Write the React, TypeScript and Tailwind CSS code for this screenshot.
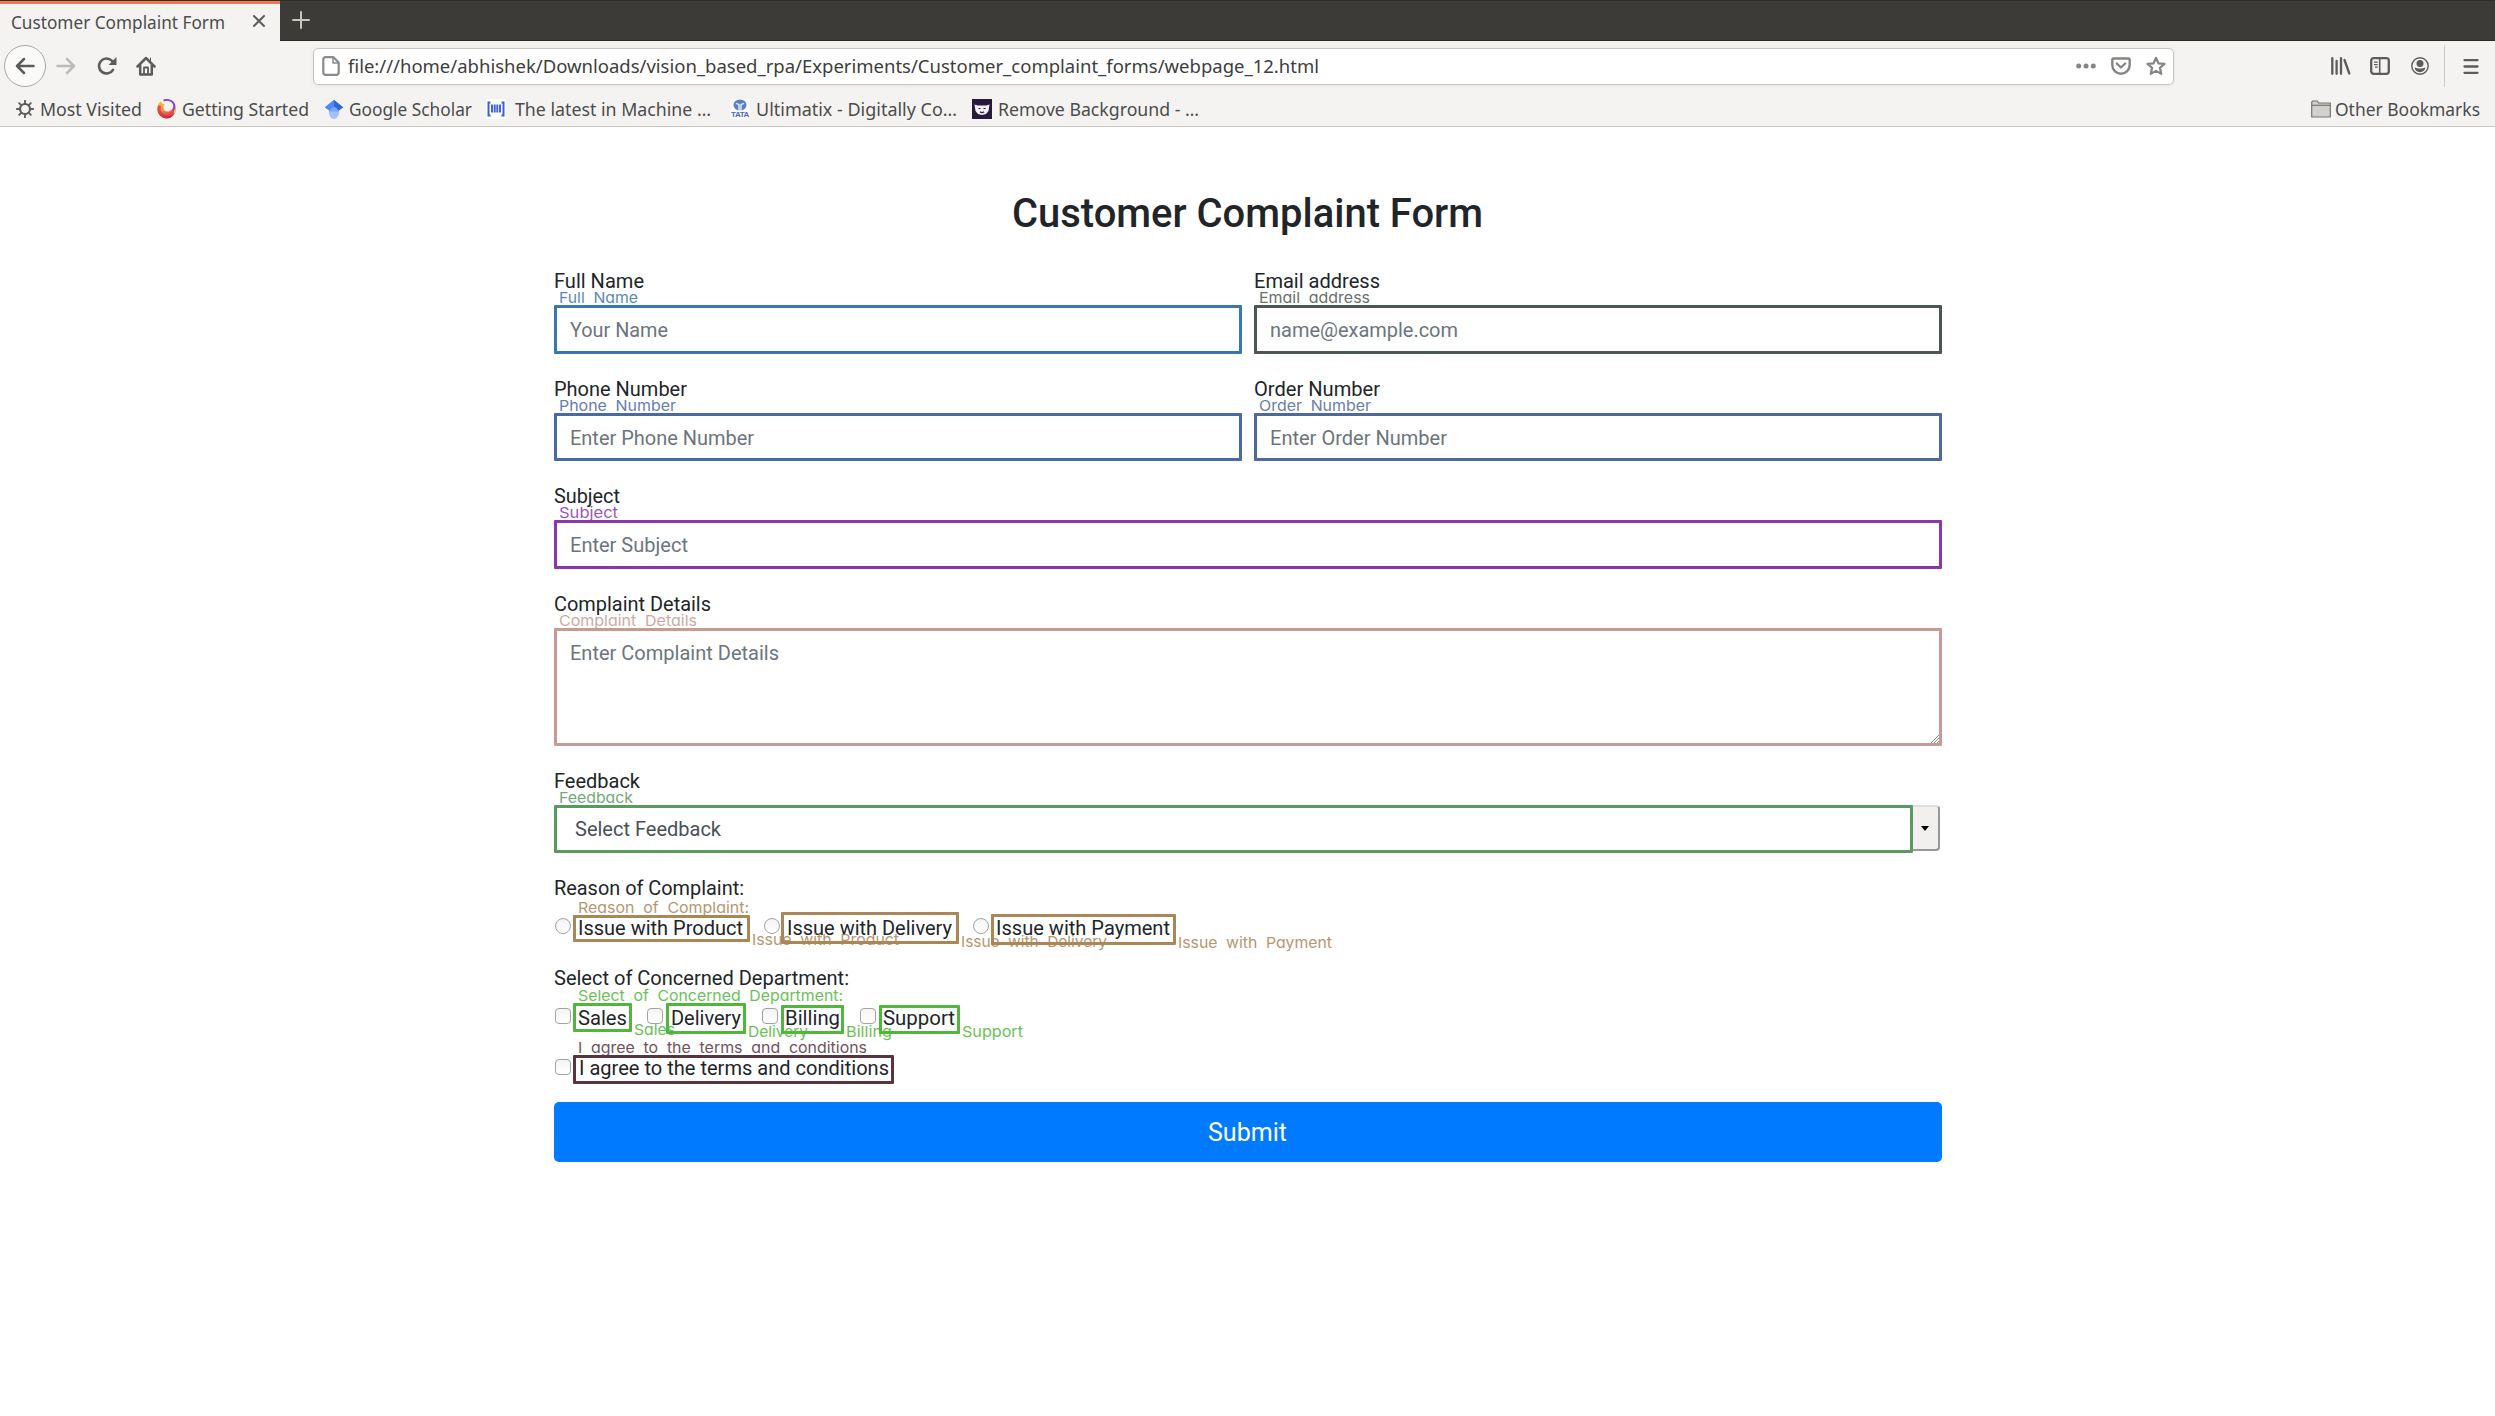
import { useLayoutEffect, useRef, useState } from "react";
import type { ReactNode } from "react";

/** One line of text that is stretched to fill the width given by its class. */
function Fit({ children, className = "" }: { children: ReactNode; className?: string }) {
  const outer = useRef<HTMLSpanElement>(null);
  const inner = useRef<HTMLSpanElement>(null);
  const [scale, setScale] = useState(1);
  useLayoutEffect(() => {
    if (outer.current && inner.current) {
      setScale(outer.current.offsetWidth / inner.current.getBoundingClientRect().width);
    }
  }, []);
  return (
    <span ref={outer} className={`block shrink-0 whitespace-pre ${className}`}>
      <span ref={inner} className="inline-block origin-left" style={{ transform: `scaleX(${scale})` }}>
        {children}
      </span>
    </span>
  );
}

/* ---------- Browser chrome ---------- */

function TabStrip() {
  return (
    <div className="flex h-[41px] border-t border-b border-t-[#2f2e2b] border-b-[#2b2a27] bg-[#3c3b37]">
      <div className="-mb-px flex w-[280px] items-center border-t-[3px] border-[#f0794f] bg-[#f4f3f1] pl-[11px] text-[18px] leading-[35px] text-[#4c4c4c]">
        <Fit className="-mt-px w-[214px]">Customer Complaint Form</Fit>
        <svg className="-mt-[3px] ml-[27px]" width="14" height="14" viewBox="0 0 14 14" stroke="#5c5c5a" strokeWidth="2" strokeLinecap="round">
          <path d="M2 2l10 10M12 2L2 12" />
        </svg>
      </div>
      <svg className="mt-[9px] ml-[11px]" width="20" height="20" viewBox="0 0 20 20" stroke="#c9c6c0" strokeWidth="2" strokeLinecap="round">
        <path d="M10 2v16M2 10h16" />
      </svg>
    </div>
  );
}

function NavBar() {
  return (
    <div className="flex h-[51px] items-center pb-px pl-[4px]">
      <div className="flex size-[42px] items-center justify-center rounded-full border border-[#aaa8a5] bg-[#fafaf9]">
        <svg width="20" height="18" viewBox="0 0 20 18" fill="none" stroke="#5c5c5a" strokeWidth="2.500" strokeLinecap="round" strokeLinejoin="round">
          <path d="M18.500 9H2M9 2L2 9l7 7" />
        </svg>
      </div>
      <svg className="ml-[10px]" width="20" height="18" viewBox="0 0 20 18" fill="none" stroke="#bdbbb8" strokeWidth="2.500" strokeLinecap="round" strokeLinejoin="round">
        <path d="M1.500 9H18M11 2l7 7-7 7" />
      </svg>
      <svg className="ml-[21px]" width="20" height="20" viewBox="0 0 20 20" fill="none" stroke="#5c5c5a" strokeWidth="2.600" strokeLinecap="round">
        <path d="M16 13.800A7.500 7.500 0 1 1 14.800 4.700L17 7" />
        <path d="M19.500 1v8h-8z" fill="#5c5c5a" stroke="none" />
      </svg>
      <svg className="ml-[19px]" width="20" height="20" viewBox="0 0 20 20" fill="none" stroke="#5c5c5a" strokeWidth="2.500" strokeLinecap="round" strokeLinejoin="round">
        <path d="M1.500 10.500L10 2l8.500 8.500M4.200 9.500v9h11.600v-9" />
        <path d="M8 18v-6.500h4V18" strokeWidth="1.800" />
        <path d="M14.500 2v3" strokeWidth="1" />
      </svg>

      <div className="ml-[157px] flex h-[37px] w-[1861px] items-center rounded-[5px] border border-[#c8c5c1] bg-white pl-[8px] shadow-[0_1px_4px_rgba(0,0,0,0.06)]">
        <svg width="18" height="20" viewBox="0 0 18 20" fill="none" stroke="#8b8b8a" strokeWidth="2.200" strokeLinejoin="round">
          <path d="M3.500 1.200h8L16.700 6.500v10a2.200 2.200 0 0 1-2.200 2.300h-11a2.200 2.200 0 0 1-2.200-2.300V3.500a2.200 2.200 0 0 1 2.200-2.300z" />
          <path d="M11 1.500V7h5.500" strokeWidth="1.500" />
        </svg>
        <Fit className="ml-[8px] w-[971px] text-[18.5px] leading-[34px] text-[#3d3d3d]">
          file:///home/abhishek/Downloads/vision_based_rpa/Experiments/Customer_complaint_forms/webpage_12.html
        </Fit>
        <div className="mr-[7px] ml-auto flex items-center">
          <svg width="20" height="6" viewBox="0 0 20 6" fill="#858583">
            <circle cx="2.700" cy="3" r="2.500" />
            <circle cx="10" cy="3" r="2.500" />
            <circle cx="17.300" cy="3" r="2.500" />
          </svg>
          <svg className="ml-[15px]" width="20" height="18" viewBox="0 0 20 18" fill="none" stroke="#858583" strokeWidth="2.400" strokeLinecap="round" strokeLinejoin="round">
            <path d="M2.700 1.500h14.600a1.400 1.400 0 0 1 1.400 1.400V8A8.700 8.700 0 0 1 1.300 8V2.900a1.400 1.400 0 0 1 1.400-1.400z" />
            <path d="M5.800 6.500L10 10.500l4.200-4" />
          </svg>
          <svg className="ml-[15px]" width="20" height="20" viewBox="0 0 20 20" fill="none" stroke="#858583" strokeWidth="2.200" strokeLinejoin="round">
            <path d="M10 1.800l2.400 5.500 6.100.6-4.600 4 1.400 6L10 14.900l-5.300 3 1.400-6-4.600-4 6.100-.6z" />
          </svg>
        </div>
      </div>

      <svg className="ml-[157px]" width="20" height="18" viewBox="0 0 20 18" stroke="#5c5c5a" strokeWidth="2.300" strokeLinecap="round">
        <path d="M1.300 1.200v15.600M5.600 4v12.800M10 1.200v15.600M13.500 3l4.800 13.500" />
      </svg>
      <svg className="ml-[19px]" width="20" height="18" viewBox="0 0 20 18" fill="none" stroke="#5c5c5a" strokeWidth="2.300">
        <rect x="1.200" y="1.200" width="17.600" height="15.600" rx="2.500" />
        <path d="M9.700 1v16" strokeWidth="1.600" />
        <path d="M4 5.200h3.700M4 7.700h3.700M5 10.200h2.700" strokeWidth="1.200" />
      </svg>
      <svg className="ml-[21px]" width="18" height="18" viewBox="0 0 18 18">
        <circle cx="9" cy="9" r="8.200" fill="none" stroke="#5c5c5a" strokeWidth="1.400" />
        <circle cx="9" cy="6.600" r="3.500" fill="#5c5c5a" />
        <path d="M3.700 10.500c2 .8 3 1 5.300 1s3.300-.2 5.300-1c0 2.500-2.400 4.700-5.300 4.700s-5.300-2.200-5.300-4.700z" fill="#5c5c5a" />
      </svg>
      <div className="ml-[15px] h-[42px] w-px bg-[#cfccc8]" />
      <svg className="ml-[18px]" width="16" height="17" viewBox="0 0 16 17" stroke="#5c5c5a" strokeWidth="2.300" strokeLinecap="round">
        <path d="M1.500 2.200h13M1.500 8.500h13M1.500 14.800h13" />
      </svg>
    </div>
  );
}

function GearIcon() {
  return (
    <svg width="18" height="18" viewBox="0 0 18 18" fill="none" stroke="#5c5c5a">
      <circle cx="9" cy="9" r="5" strokeWidth="2.200" />
      <path
        d="M9 .8v3M9 14.200v3M.8 9h3M14.200 9h3M3.200 3.200l2.100 2.100M12.700 12.700l2.100 2.100M14.800 3.200l-2.100 2.100M5.300 12.700l-2.100 2.100"
        strokeWidth="1.900"
        strokeLinecap="round"
      />
    </svg>
  );
}

function FirefoxIcon() {
  return (
    <svg width="19" height="20" viewBox="0 0 19 20">
      <defs>
        <linearGradient id="flame" x1="0.2" y1="0.1" x2="0.7" y2="1">
          <stop offset="0" stopColor="#ffb53a" />
          <stop offset="0.45" stopColor="#f5843c" />
          <stop offset="1" stopColor="#d0244e" />
        </linearGradient>
      </defs>
      <path d="M3.500 2.800C1.200 4.800.2 7.300.3 10.200a9.200 9.200 0 0 0 18.400 0c0-2.700-.8-5-2.500-6.700 1 4.500-1.200 8.700-5.100 8.900-3.200.1-4.900-1.700-4.700-4 .1-1.400.7-2.200 1.700-2.800-1.800-.1-3.200-.8-3.600-2.500z" fill="url(#flame)" />
      <path d="M1 6.500C.2 9 .1 11.500 1.200 14c1.600 3.600 5 5.400 8.600 5.400 2.500 0 4.700-1 6.300-2.600-4.600 1.200-9.200-.2-11.400-3.800C3.500 11 3.300 9 4 6.700z" fill="#c4204f" opacity=".6" />
      <path d="M16.200 3.500c1.700 1.700 2.500 4 2.500 6.700 0 2.200-.8 4.200-2 5.800.8-4 .8-8-.5-12.500z" fill="#ffd23a" />
      <path d="M6.500 1.600c3.300-1.400 7.500-.6 9.600 2.100 2 2.600 1.700 6.300-.5 8" fill="none" stroke="#8040e0" strokeWidth="1.900" />
    </svg>
  );
}

function ScholarIcon() {
  return (
    <svg width="18" height="19" viewBox="0 0 18 19">
      <path d="M9 0L0 7.200l4.500 3.600L9 7z" fill="#4c8bf5" />
      <path d="M9 0l9 7.200-4.500 3.600L9 7z" fill="#3367d6" />
      <path d="M3.800 11.500h10.400c0 3.500-2 7.500-5.200 7.500s-5.200-4-5.200-7.500z" fill="#a0c3ff" />
      <path d="M3.800 11.800C4.500 9 6.500 6.800 9 6.800s4.500 2.200 5.200 5z" fill="#76a7fa" />
      <path d="M9 0L0 7.200l4.500 3.600C5.500 8.500 7 7 9 7z" fill="#4c8bf5" />
      <path d="M9 0l9 7.200-4.500 3.600C12.500 8.500 11 7 9 7z" fill="#3367d6" />
    </svg>
  );
}

function MachineIcon() {
  return (
    <svg className="bg-white" width="20" height="20" viewBox="0 0 20 20" fill="none" stroke="#3c5fd6">
      <path d="M4.500 3.500H2.500v13h2M15.500 3.500h2v13h-2" strokeWidth="2" />
      <path d="M6 5.500v8M8.700 5.500v8M11.300 5.500v8M14 5.500v8" strokeWidth="1.900" />
    </svg>
  );
}

function TataIcon() {
  return (
    <span className="flex h-[20px] w-[20px] flex-col items-center bg-[#fbfbfb]">
      <svg width="14" height="12" viewBox="0 0 14 12">
        <ellipse cx="7" cy="6" rx="6.500" ry="5.500" fill="#5b80c4" />
        <path d="M6 12V5.500L3 4.500M8 12V5.500l3-1" stroke="#fff" strokeWidth="1.200" fill="none" />
      </svg>
      <span className="font-['Liberation_Sans'] text-[8px] leading-[8px] font-bold tracking-[-0.4px] text-[#4a6cb5]">TATA</span>
    </span>
  );
}

function RemoveIcon() {
  return (
    <svg className="bg-[#271a3d]" width="20" height="20" viewBox="0 0 20 20">
      <path d="M2.500 5.500l3 1h9l3-1-1 6.500-2.500 3-4 1-4-1-2.500-3z" fill="#f4f1f6" />
      <path d="M6.500 9.500h2M11.500 9.500h2M8 12.800c1.200.9 2.800.9 4 0" stroke="#271a3d" strokeWidth="1.200" fill="none" />
    </svg>
  );
}

function BookmarksBar() {
  return (
    <div className="flex h-[35px] items-center border-b border-[#c9c5c1] pl-[16px] text-[18px] leading-[34px] text-[#4c4c4c]">
      <GearIcon />
      <Fit className="ml-[6px] w-[102px]">Most Visited</Fit>
      <span className="ml-[15px]"><FirefoxIcon /></span>
      <Fit className="ml-[6px] w-[127px]">Getting Started</Fit>
      <span className="ml-[16px]"><ScholarIcon /></span>
      <Fit className="ml-[6px] w-[123px]">Google Scholar</Fit>
      <span className="ml-[14px]"><MachineIcon /></span>
      <Fit className="ml-[9px] w-[196px]">The latest in Machine …</Fit>
      <span className="ml-[19px]"><TataIcon /></span>
      <Fit className="ml-[6px] w-[201px]">Ultimatix - Digitally Co…</Fit>
      <span className="ml-[15px]"><RemoveIcon /></span>
      <Fit className="ml-[6px] w-[201px]">Remove Background - …</Fit>
      <div className="mr-[15px] ml-auto flex items-center">
        <svg width="20" height="18" viewBox="0 0 20 18" fill="#d2d0cd" stroke="#777573" strokeWidth="1.200">
          <path d="M.7 17V2.200L1.700 1h4.600l1.300 2h11.700v14z" />
          <path d="M.7 5.300h18.600" />
        </svg>
        <Fit className="ml-[4px] w-[145px]">Other Bookmarks</Fit>
      </div>
    </div>
  );
}

/* ---------- Form ---------- */

const caption =
  "absolute font-['Inter'] text-[15px] leading-[16px] font-normal [word-spacing:4px] [font-feature-settings:'cv11'] opacity-85";

interface FieldProps {
  label: string;
  labelWidth: string;
  captionWidth: string;
  color: string;
  text: string;
  textWidth: string;
  boxClass?: string;
  children?: ReactNode;
}

function Field({ label, labelWidth, captionWidth, color, text, textWidth, boxClass = "h-[49px]", children }: FieldProps) {
  return (
    <div className="relative">
      <Fit className={`h-[39px] leading-[30px] ${labelWidth}`}>{label}</Fit>
      <Fit className={`${caption} top-[24px] left-[5px] ${captionWidth} ${color}`}>{label}</Fit>
      <div className={`flex rounded-[1px] border-[3px] border-current ${boxClass} ${color}`}>
        <Fit className={`ml-[13px] h-[43px] leading-[44px] text-[#6c757d] ${textWidth}`}>{text}</Fit>
        {children}
      </div>
    </div>
  );
}

function Mark({ kind, className }: { kind: "radio" | "check"; className: string }) {
  return (
    <span
      className={`mt-[5px] size-[16px] shrink-0 border border-[#a3a3a3] bg-linear-to-b from-[#f4f4f4] to-white ${kind === "radio" ? "rounded-full" : "rounded-[4px]"} ${className}`}
    />
  );
}

function Outline({ className }: { className: string }) {
  return <span className={`absolute rounded-[1px] border-[3px] border-current ${className}`} />;
}

function ComplaintForm() {
  return (
    <main className="mx-auto mt-[54px] w-[1388px] font-['Roboto',sans-serif] text-[20px] text-[#212529]">
      <h1 className="flex h-[85px] justify-center text-[40px] leading-[66px] font-medium">
        <Fit className="w-[471px]">Customer Complaint Form</Fit>
      </h1>

      <div className="grid grid-cols-2 gap-x-[12px]">
        <div className="h-[108px]">
          <Field label="Full Name" labelWidth="w-[90px]" captionWidth="w-[79px]" color="text-[#3778b1]" text="Your Name" textWidth="w-[98px]" />
        </div>
        <div className="h-[108px]">
          <Field label="Email address" labelWidth="w-[126px]" captionWidth="w-[111px]" color="text-[#4d5752]" text="name@example.com" textWidth="w-[188px]" />
        </div>
        <div className="h-[107px]">
          <Field label="Phone Number" labelWidth="w-[133px]" captionWidth="w-[117px]" color="text-[#4a69a7]" text="Enter Phone Number" textWidth="w-[184px]" boxClass="h-[48px]" />
        </div>
        <div className="h-[107px]">
          <Field label="Order Number" labelWidth="w-[126px]" captionWidth="w-[112px]" color="text-[#50699c]" text="Enter Order Number" textWidth="w-[177px]" boxClass="h-[48px]" />
        </div>
      </div>

      <div className="h-[108px]">
        <Field label="Subject" labelWidth="w-[66px]" captionWidth="w-[59px]" color="text-[#8a37ad]" text="Enter Subject" textWidth="w-[118px]" />
      </div>

      <div className="h-[177px]">
        <Field label="Complaint Details" labelWidth="w-[157px]" captionWidth="w-[138px]" color="text-[#c69b94]" text="Enter Complaint Details" textWidth="w-[209px]" boxClass="h-[118px]">
          <svg className="mt-auto ml-auto" width="8" height="8" viewBox="0 0 8 8" stroke="#8f8f8f" strokeWidth="1">
            <path d="M0 8L8 0M3 8l5-5M6 8l2-2" />
          </svg>
        </Field>
      </div>

      <div className="relative h-[107px]">
        <Fit className="h-[39px] w-[86px] leading-[30px]">Feedback</Fit>
        <Fit className={`${caption} top-[24px] left-[5px] w-[74px] text-[#5a9a60]`}>Feedback</Fit>
        <div className="flex">
          <div className="h-[48px] w-[1359px] rounded-[1px] border-[3px] border-[#5a9a60] pl-[18px] leading-[42px] text-[#495057]">
            <Fit className="w-[146px]">Select Feedback</Fit>
          </div>
          <div className="flex h-[46px] w-[27px] items-center justify-center rounded-r-[4px] border-t-2 border-r-2 border-b-2 border-t-[#dedfe1] border-r-[#989898] border-b-[#989898] bg-[#f1f0ee]">
            <svg width="8" height="5" viewBox="0 0 8 5">
              <path d="M0 0h8L4 5z" />
            </svg>
          </div>
        </div>
      </div>

      <section className="relative h-[90px]">
        <Fit className="h-[40px] w-[190px] leading-[30px]">Reason of Complaint:</Fit>
        <div className="flex leading-[30px]">
          <Mark kind="radio" className="ml-px" />
          <Fit className="ml-[7px] w-[165px]">Issue with Product</Fit>
          <Mark kind="radio" className="ml-[21px]" />
          <Fit className="ml-[7px] w-[165px]">Issue with Delivery</Fit>
          <Mark kind="radio" className="ml-[21px]" />
          <Fit className="ml-[7px] w-[174px]">Issue with Payment</Fit>
        </div>
        <div className="text-[#ab8657]">
          <Outline className="top-[42px] left-[19px] h-[27px] w-[177px]" />
          <Outline className="top-[39px] left-[227px] h-[32px] w-[178px]" />
          <Outline className="top-[41px] left-[437px] h-[31px] w-[185px]" />
          <Fit className={`${caption} top-[27px] left-[24px] w-[171px]`}>Reason of Complaint:</Fit>
          <Fit className={`${caption} top-[59px] left-[198px] w-[147px]`}>Issue with Product</Fit>
          <Fit className={`${caption} top-[61px] left-[407px] w-[146px]`}>Issue with Delivery</Fit>
          <Fit className={`${caption} top-[62px] left-[624px] w-[154px]`}>Issue with Payment</Fit>
        </div>
      </section>

      <section className="relative h-[90px]">
        <Fit className="h-[40px] w-[295px] leading-[30px]">Select of Concerned Department:</Fit>
        <div className="flex leading-[30px]">
          <Mark kind="check" className="ml-px" />
          <Fit className="ml-[7px] w-[49px]">Sales</Fit>
          <Mark kind="check" className="ml-[20px]" />
          <Fit className="ml-[8px] w-[70px]">Delivery</Fit>
          <Mark kind="check" className="ml-[21px]" />
          <Fit className="ml-[7px] w-[55px]">Billing</Fit>
          <Mark kind="check" className="ml-[20px]" />
          <Fit className="ml-[7px] w-[72px]">Support</Fit>
        </div>
        <div className="text-[#4fb739]">
          <Outline className="top-[40px] left-[19px] h-[29px] w-[59px]" />
          <Outline className="top-[40px] left-[112px] h-[31px] w-[80px]" />
          <Outline className="top-[42px] left-[227px] h-[29px] w-[63px]" />
          <Outline className="top-[42px] left-[325px] h-[29px] w-[81px]" />
          <Fit className={`${caption} top-[25px] left-[24px] w-[265px]`}>Select of Concerned Department:</Fit>
          <Fit className={`${caption} top-[59px] left-[80px] w-[41px]`}>Sales</Fit>
          <Fit className={`${caption} top-[61px] left-[194px] w-[60px]`}>Delivery</Fit>
          <Fit className={`${caption} top-[61px] left-[292px] w-[46px]`}>Billing</Fit>
          <Fit className={`${caption} top-[61px] left-[408px] w-[61px]`}>Support</Fit>
        </div>
      </section>

      <section className="relative h-[49px]">
        <div className="flex leading-[30px]">
          <Mark kind="check" className="mt-[6px] ml-px" />
          <Fit className="ml-[8px] w-[310px]">I agree to the terms and conditions</Fit>
        </div>
        <div className="text-[#59333f]">
          <Outline className="top-[2px] left-[19px] h-[29px] w-[321px]" />
          <Fit className={`${caption} top-[-13px] left-[24px] w-[289px]`}>I agree to the terms and conditions</Fit>
        </div>
      </section>

      <button className="flex h-[60px] w-full justify-center rounded-[5px] bg-[#007bff] text-[25px] leading-[61px] text-white">
        <Fit className="w-[79px]">Submit</Fit>
      </button>
    </main>
  );
}

export default function App() {
  return (
    <div className="min-h-screen overflow-hidden bg-white">
      <header className="bg-[#f4f3f1] font-['Noto_Sans',sans-serif]">
        <TabStrip />
        <NavBar />
        <BookmarksBar />
      </header>
      <ComplaintForm />
    </div>
  );
}
